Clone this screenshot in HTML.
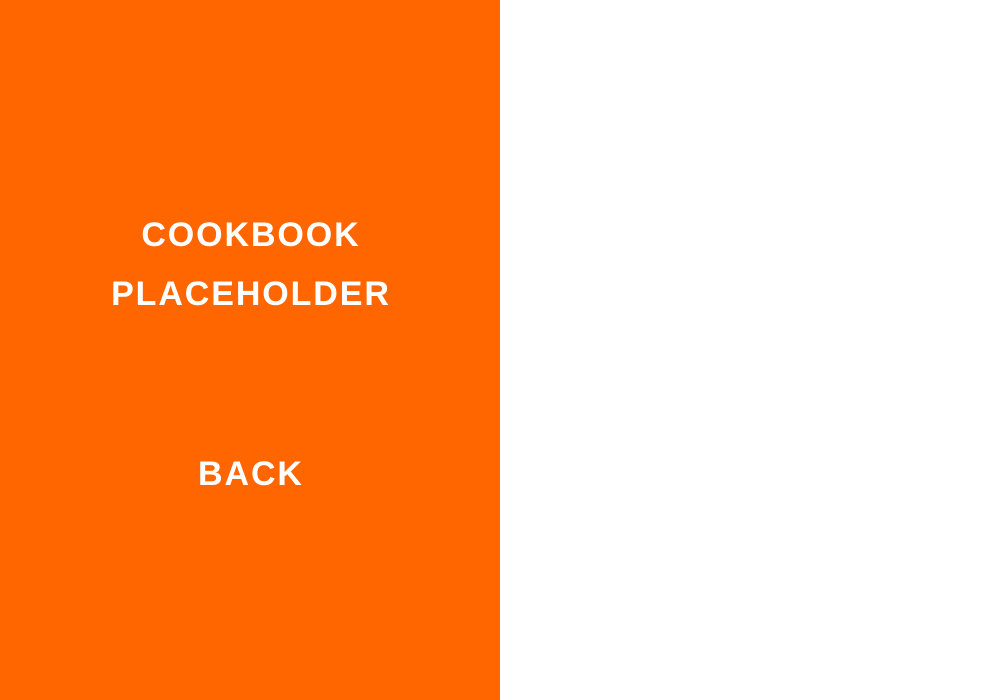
<!DOCTYPE html>
<html><head><style>
body{margin:0;width:1000px;height:700px;background:#fff;position:relative;overflow:hidden;font-family:"Liberation Sans",sans-serif;font-weight:bold;color:#fff}
.l{position:absolute;left:0;top:0;width:500px;height:700px;background:#ff6600}
.t{position:absolute;left:0;width:500px;text-align:center;font-size:34px;line-height:40px;letter-spacing:1.9px;text-indent:1.9px}
</style></head><body>
<div class="l">
<div class="t" style="top:215px">COOKBOOK</div>
<div class="t" style="top:274px">PLACEHOLDER</div>
<div class="t" style="top:454px">BACK</div>
</div>
</body></html>
